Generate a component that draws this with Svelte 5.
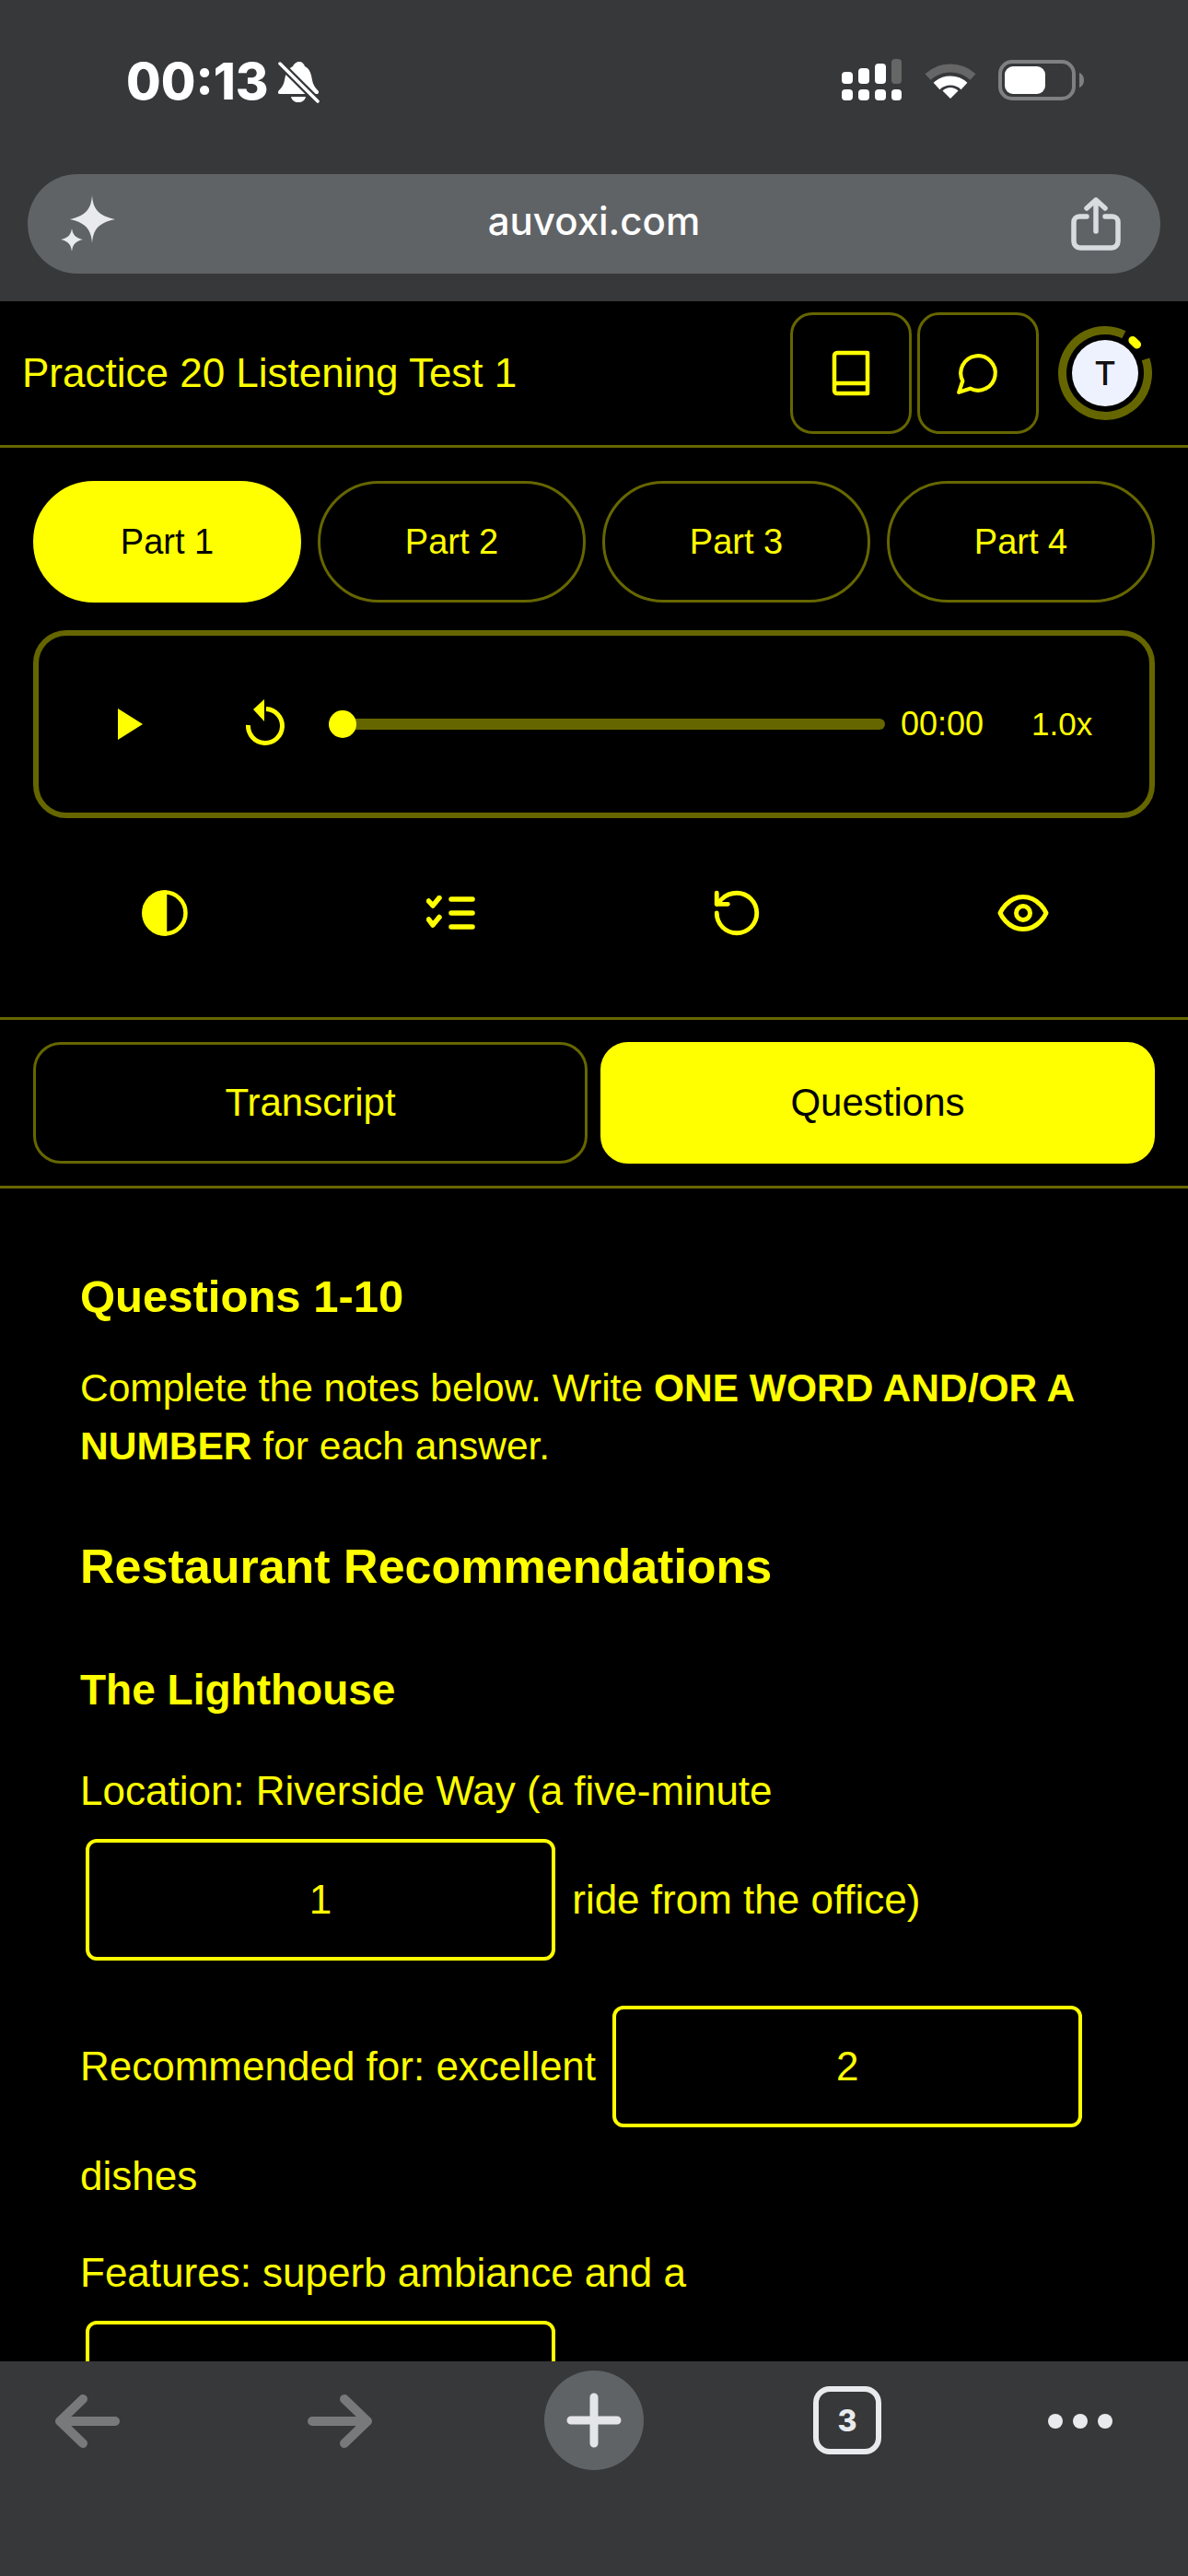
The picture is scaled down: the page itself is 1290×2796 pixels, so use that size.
<script>
  const parts = ['Part 1', 'Part 2', 'Part 3', 'Part 4'];
</script>

<div class="phone">
  <header class="chrome">
    <div class="status">
      <div class="time-group">
        <span class="time">00:13</span>
        <svg class="bell" width="46" height="46" viewBox="0 0 46 46">
          <path d="M24 1c3 0 5 2 6 5 6 3 7 9 8 15 1 5 3 8 6 11 2 2 1 4-1 4H3c-2 0-3-2-1-4 3-3 5-6 6-11 1-6 3-12 9-15 1-3 4-5 7-5Z" fill="#fff"/>
          <path d="M15 39h16c-1 4-4 6-8 6s-7-2-8-6Z" fill="#fff"/>
          <path d="M1 1 45 45" stroke="#36383a" stroke-width="8"/>
          <path d="M3 3 44 44" stroke="#fff" stroke-width="3.500" stroke-linecap="round"/>
        </svg>
      </div>
      <div class="status-icons">
        <svg class="signal" width="66" height="46" viewBox="0 0 66 46" fill="#fff">
          <rect x="0" y="14" width="12" height="13" rx="4"/>
          <rect x="18" y="10" width="12" height="17" rx="4"/>
          <rect x="36" y="5" width="12" height="22" rx="4"/>
          <rect x="54" y="0" width="11" height="27" rx="4" fill="#666"/>
          <rect x="0" y="33" width="12" height="12" rx="4"/>
          <rect x="18" y="33" width="12" height="12" rx="4"/>
          <rect x="36" y="33" width="12" height="12" rx="4"/>
          <rect x="54" y="33" width="11" height="12" rx="4"/>
        </svg>
        <svg class="wifi" width="58" height="42" viewBox="0 0 58 42" fill="none">
          <path d="M4.500 17.500a36.500 36.500 0 0 1 49 0" stroke="#666" stroke-width="9"/>
          <path d="M14 27.500a22 22 0 0 1 30 0" stroke="#fff" stroke-width="10"/>
          <path d="M29 41 20.500 32.500a12 12 0 0 1 17 0Z" fill="#fff"/>
        </svg>
        <svg class="battery" width="94" height="44" viewBox="0 0 94 44" fill="none">
          <rect x="2" y="2" width="80" height="40" rx="13" stroke="#808080" stroke-width="4"/>
          <rect x="7" y="7" width="44" height="30" rx="9" fill="#fff"/>
          <path d="M88 14c3 1 5 4 5 8s-2 7-5 8Z" fill="#808080"/>
        </svg>
      </div>
    </div>
    <div class="urlbar">
      <svg class="sparkle" width="62" height="72" viewBox="0 0 62 72" fill="#e8eaed">
        <path d="M34 5c1 14 6 22 25 26-19 4-24 12-25 26-1-14-6-22-24-26 18-4 23-12 24-26Z"/>
        <path d="M12 41c1 6 3 10 12 12-9 2-11 6-12 13-1-7-3-11-12-13 9-2 11-6 12-12Z"/>
      </svg>
      <span class="url">auvoxi.com</span>
      <svg class="share" width="54" height="58" viewBox="0 0 54 58" fill="none" stroke="#d9dcdf" stroke-width="5.500" stroke-linecap="round" stroke-linejoin="round">
        <path d="M17 21H9a6 6 0 0 0-6 6v21a7 7 0 0 0 7 7h34a7 7 0 0 0 7-7V27a6 6 0 0 0-6-6h-8"/>
        <path d="M27 37V3M17 12l10-9 10 9"/>
      </svg>
    </div>
  </header>

  <main class="page">
    <div class="topbar">
      <span class="title">Practice 20 Listening Test 1</span>
      <div class="top-actions">
        <button class="square" aria-label="Book">
          <svg width="42" height="50" viewBox="0 0 42 50" fill="none" stroke="#ff0" stroke-width="4.500" stroke-linejoin="round">
            <path d="M3 38V6a3 3 0 0 1 3-3h33v44H6a3 3 0 0 1-3-3Z"/>
            <path d="M3 38a3 3 0 0 1 3-2h33"/>
          </svg>
        </button>
        <button class="square" aria-label="Chat">
          <svg width="50" height="50" viewBox="0 0 24 24" fill="none" stroke="#ff0" stroke-width="2" stroke-linejoin="round">
            <path d="M7.900 20A9 9 0 1 0 4 16.100L2 22Z"/>
          </svg>
        </button>
        <svg class="avatar" width="108" height="108" viewBox="0 0 108 108" fill="none">
          <path d="M98 38.900A46.500 46.500 0 1 1 74.400 12.200" stroke="#666600" stroke-width="9"/>
          <path d="M83.900 18.400 88.600 22.900" stroke="#ff0" stroke-width="9" stroke-linecap="round"/>
          <circle cx="54" cy="54" r="36" fill="#eef2ff"/>
          <text x="54" y="67" text-anchor="middle" class="avatar-letter">T</text>
        </svg>
      </div>
    </div>

    <section class="controls">
      <div class="parts">
        {#each parts as p, i}
          <button class="part" class:on={i === 0}>{p}</button>
        {/each}
      </div>

      <div class="player">
        <svg class="play" width="27" height="34" viewBox="0 0 27 34"><path d="M0 0 27 17 0 34Z" fill="#ff0"/></svg>
        <svg class="skip" width="44" height="50" viewBox="0 0 44 50" fill="none">
          <path d="M23 10.500A18.500 18.500 0 1 1 3.500 28" stroke="#ff0" stroke-width="5"/>
          <path d="M21 0 9 11 21 24Z" fill="#ff0"/>
        </svg>
        <div class="slider"><span class="thumb"></span></div>
        <span class="clock">00:00</span>
        <span class="speed">1.0x</span>
      </div>
    </section>

    <div class="tools">
      <div class="tool">
        <svg width="54" height="54" viewBox="0 0 24 24" fill="none" stroke="#ff0" stroke-width="2">
          <circle cx="12" cy="12" r="10"/>
          <path d="M12 2a10 10 0 0 0 0 20Z" fill="#ff0"/>
        </svg>
      </div>
      <div class="tool">
        <svg width="54" height="38" viewBox="0 0 54 38" fill="none" stroke="#ff0" stroke-width="5.500" stroke-linecap="round" stroke-linejoin="round">
          <path d="M2.500 6 7 11 14 2.500M2.500 26 7 32 14 23.500"/>
          <path d="M27 4h23M27 19h23M27 34h23"/>
        </svg>
      </div>
      <div class="tool">
        <svg width="58" height="58" viewBox="0 0 24 24" fill="none" stroke="#ff0" stroke-width="2" stroke-linecap="round" stroke-linejoin="round">
          <path d="M3 12a9 9 0 1 0 9-9 9.750 9.750 0 0 0-6.740 2.740L3 8"/>
          <path d="M3 3v5h5"/>
        </svg>
      </div>
      <div class="tool">
        <svg width="60" height="60" viewBox="0 0 24 24" fill="none" stroke="#ff0" stroke-width="2" stroke-linecap="round" stroke-linejoin="round">
          <path d="M2 12s3-7 10-7 10 7 10 7-3 7-10 7-10-7-10-7Z"/>
          <circle cx="12" cy="12" r="3"/>
        </svg>
      </div>
    </div>

    <div class="tabs">
      <button class="tab">Transcript</button>
      <button class="tab on">Questions</button>
    </div>

    <article class="content">
      <h2>Questions 1-10</h2>
      <p class="intro">Complete the notes below. Write <strong>ONE WORD AND/OR A NUMBER</strong> for each answer.</p>
      <h1>Restaurant Recommendations</h1>
      <h3>The Lighthouse</h3>
      <p class="note">Location: Riverside Way (a five-minute <input class="blank" placeholder="1" aria-label="Answer 1" /> ride from the office)</p>
      <p class="note">Recommended for: excellent <input class="blank" placeholder="2" aria-label="Answer 2" /> dishes</p>
      <p class="note">Features: superb ambiance and a <input class="blank" placeholder="3" aria-label="Answer 3" /></p>
    </article>
  </main>

  <footer class="toolbar">
    <svg class="nav back" width="70" height="58" viewBox="0 0 70 58" fill="none" stroke="#77797b" stroke-width="10" stroke-linecap="round" stroke-linejoin="round">
      <path d="M30 5 5 29l25 24M5 29h60"/>
    </svg>
    <svg class="nav fwd" width="70" height="58" viewBox="0 0 70 58" fill="none" stroke="#77797b" stroke-width="10" stroke-linecap="round" stroke-linejoin="round">
      <path d="M40 5l25 24-25 24M65 29H5"/>
    </svg>
    <div class="plus">
      <svg width="60" height="60" viewBox="0 0 60 60" fill="none" stroke="#e3e5e8" stroke-width="9" stroke-linecap="round">
        <path d="M30 5v50M5 30h50"/>
      </svg>
    </div>
    <div class="tabcount">3</div>
    <svg class="more" width="70" height="16" viewBox="0 0 70 16" fill="#e8eaed">
      <circle cx="8" cy="8" r="8"/><circle cx="35" cy="8" r="8"/><circle cx="62" cy="8" r="8"/>
    </svg>
  </footer>
</div>

<style>
  :global(body) { margin: 0; background: #000; }
  .phone {
    width: 1290px; height: 2796px; display: flex; flex-direction: column; overflow: hidden;
    background: #000; color: #ff0; font-family: "Liberation Sans", Arial, sans-serif;
  }
  button { font-family: inherit; cursor: pointer; padding: 0; background: none; color: inherit; }

  .chrome { height: 327px; flex: none; box-sizing: border-box; background: #36383a; padding: 0 30px; }
  .status { height: 189px; display: flex; justify-content: space-between; align-items: flex-start; box-sizing: border-box; padding: 64px 82px 0 107px; }
  .time-group { display: flex; align-items: center; gap: 10px; }
  .time { font: 800 54.500px/46px Inter, sans-serif; color: #fff; }
  .bell { margin-top: 2px; }
  .status-icons { display: flex; align-items: flex-start; gap: 23px; }
  .wifi { margin-top: 2px; }
  .battery { margin-top: 1px; }
  .urlbar {
    height: 108px; border-radius: 54px; background: #5f6366; display: flex; align-items: center; justify-content: space-between;
    padding: 0 43px 0 36px; position: relative;
  }
  .url { font: 500 42px/1 Inter, sans-serif; color: #fff; position: absolute; left: 0; right: 0; text-align: center; top: 30px; }

  .page { flex: 1; min-height: 0; overflow: hidden; display: flex; flex-direction: column; }
  .topbar {
    flex: none; height: 159px; box-sizing: border-box; border-bottom: 3px solid #666600; display: flex; align-items: center; justify-content: space-between;
    padding: 0 36px 0 24px;
  }
  .title { font-size: 44px; line-height: 1; }
  .top-actions { display: flex; align-items: center; gap: 6px; }
  .square {
    width: 132px; height: 132px; border: 3px solid #666600; border-radius: 24px; box-sizing: border-box;
    display: flex; align-items: center; justify-content: center;
  }
  .avatar { margin-left: 12px; }
  .avatar-letter { font: 500 36px Inter, sans-serif; fill: #111; }

  .controls { flex: none; padding: 36px 36px 0; }
  .parts { display: grid; grid-template-columns: repeat(4, 1fr); gap: 18px; }
  .part { height: 132px; border: 3px solid #666600; border-radius: 66px; font-size: 38px; box-sizing: border-box; }
  .part.on { background: #ff0; border-color: #ff0; color: #000; }

  .player {
    margin-top: 30px; height: 204px; box-sizing: border-box; border: 6px solid #666600; border-radius: 36px;
    display: flex; align-items: center; padding-left: 86px;
  }
  .skip { margin-left: 111px; margin-top: -4px; }
  .slider { position: relative; width: 604px; height: 12px; margin-left: 47px; border-radius: 6px; background: #666600; }
  .thumb { position: absolute; left: 0; top: -9px; width: 30px; height: 30px; border-radius: 50%; background: #ff0; }
  .clock { font-size: 36px; margin-left: 17px; }
  .speed { font-size: 35px; margin-left: 52px; }

  .tools {
    flex: none; display: grid; grid-template-columns: repeat(4, 1fr); height: 219px; padding: 0 24px 10px; box-sizing: border-box; align-items: center;
    border-bottom: 3px solid #666600;
  }
  .tool { display: flex; justify-content: center; align-items: center; }

  .tabs {
    flex: none; display: grid; grid-template-columns: 1fr 1fr; gap: 14px; padding: 24px 36px; box-sizing: border-box; height: 183px;
    border-bottom: 3px solid #666600;
  }
  .tab { height: 132px; border: 3px solid #666600; border-radius: 30px; font-size: 42px; box-sizing: border-box; }
  .tab.on { background: #ff0; border-color: #ff0; color: #000; }

  .content { padding: 89px 87px 0; font-size: 44px; line-height: 63px; }
  h2 { margin: 0; font-size: 49px; line-height: 56px; font-weight: 700; }
  .intro { margin: 40px 0 0; font-size: 42.500px; }
  h1 { margin: 68px 0 0; font-size: 52px; line-height: 62px; font-weight: 700; }
  h3 { margin: 77px 0 0; font-size: 46px; line-height: 52px; font-weight: 700; }
  .note { margin: 52px 0 0; }
  .note + .note { margin-top: 7px; }
  .note:last-child { margin-top: 42px; }
  .blank {
    width: 510px; height: 132px; box-sizing: border-box; margin: 21px 6px; padding: 0; border: 4.500px solid #ff0; border-radius: 12px;
    background: #000; color: #ff0; font: 44px "Liberation Sans", Arial, sans-serif; text-align: center; outline: none;
  }
  .blank::placeholder { color: #ff0; opacity: 1; }

  .toolbar { flex: none; height: 233px; box-sizing: border-box; background: #36383a; display: flex; align-items: flex-start; padding: 10px 0 0 60px; position: relative; }
  .nav { margin-top: 26px; }
  .fwd { margin-left: 204px; }
  .plus { width: 108px; height: 108px; margin-left: 187px; border-radius: 50%; background: #5f6366; display: flex; align-items: center; justify-content: center; }
  .tabcount {
    width: 74px; height: 74px; margin: 17px 0 0 184px; box-sizing: border-box; border: 6px solid #e8eaed; border-radius: 18px;
    display: flex; align-items: center; justify-content: center; font: 800 32px Inter, sans-serif; color: #e8eaed;
  }
  .more { margin: 47px 0 0 181px; }
</style>
